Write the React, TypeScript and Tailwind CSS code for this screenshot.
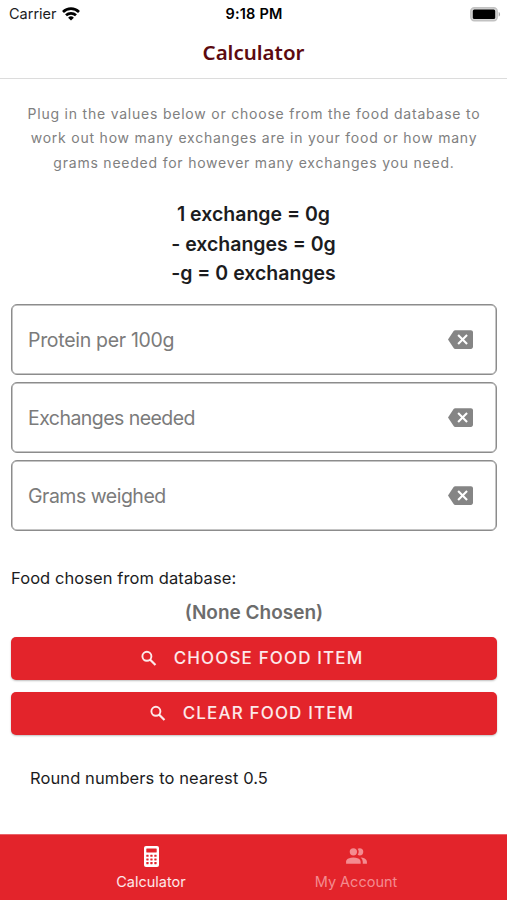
import { useState } from "react"
import { MdBackspace } from "react-icons/md"

const fields = [
  { id: "protein", label: "Protein per 100g", tracking: "tracking-[-0.3px]" },
  { id: "exchanges", label: "Exchanges needed", tracking: "tracking-[-0.55px]" },
  { id: "grams", label: "Grams weighed", tracking: "tracking-[-0.5px]" },
]

function WifiIcon() {
  return (
    <svg viewBox="0 0 18 14" className="h-[14px] w-[18px]" fill="none" stroke="#000" strokeWidth="2.7">
      <path d="M1 4.9a11.6 11.6 0 0 1 16 0" />
      <path d="M4 8.3a7.3 7.3 0 0 1 10 0" />
      <path d="M9 13.6 6.1 10.7a4.2 4.2 0 0 1 5.8 0Z" fill="#000" stroke="none" />
    </svg>
  )
}

function BatteryIcon() {
  return (
    <svg viewBox="0 0 31 15" className="h-[15px] w-[31px]">
      <rect x="0.75" y="0.75" width="26.5" height="13" rx="3.5" fill="#d4d4d4" stroke="#c2c2c2" strokeWidth="1.3" />
      <rect x="2.8" y="2.6" width="22.4" height="9.3" rx="1.5" fill="#000" />
      <path d="M28.7 4.9c1.8.7 1.8 4 0 4.7Z" fill="#a8a8a8" />
    </svg>
  )
}

function SearchIcon() {
  return (
    <svg viewBox="0 0 20 20" className="size-5" fill="none" stroke="currentColor">
      <circle cx="7.9" cy="7.3" r="4.5" strokeWidth="1.9" />
      <path d="m11.2 10.7 5.3 5.3" strokeWidth="2.2" />
    </svg>
  )
}

function CalculatorIcon() {
  return (
    <svg viewBox="0 0 15 21" className="h-[21px] w-[15px]">
      <rect width="15" height="21" rx="2" fill="#fff" />
      <g fill="#e3242b">
        <rect x="2.3" y="2.6" width="10.4" height="3.8" rx="0.4" />
        {[8.7, 12.4, 16.1].map((y) =>
          [2.3, 6.3, 10.3].map((x) => <rect key={`${x}-${y}`} x={x} y={y} width="2.3" height="2.1" rx="0.4" />)
        )}
      </g>
    </svg>
  )
}

function PeopleIcon() {
  return (
    <svg viewBox="0 0 24 24" className="h-[25px] w-[25px]" fill="currentColor">
      <path d="M16 17V19H2V17S2 13 9 13 16 17 16 17M12.5 7.5A3.5 3.5 0 1 0 9 11A3.5 3.5 0 0 0 12.5 7.5M15.94 13A5.32 5.32 0 0 1 18 17V19H22V17S22 13.37 15.94 13M15 4A3.39 3.39 0 0 0 13.07 4.59A5 5 0 0 1 13.07 10.41A3.39 3.39 0 0 0 15 11A3.5 3.5 0 0 0 15 4Z" />
    </svg>
  )
}

function FoodButton({ label, onClick }: { label: string; onClick?: () => void }) {
  return (
    <button
      type="button"
      onClick={onClick}
      className="flex h-[43px] w-full items-center justify-center gap-[15px] rounded-[5px] bg-[#e3242b] pr-[6px] text-[17px] font-medium tracking-[1.15px] text-white/90 shadow-[0_1px_2px_rgba(0,0,0,0.25)]"
    >
      <SearchIcon />
      <span>{label}</span>
    </button>
  )
}

export default function App() {
  const [values, setValues] = useState<Record<string, string>>({})

  return (
    <div className="flex h-[900px] w-[507px] flex-col overflow-hidden bg-white font-['Inter',sans-serif] text-[#1c1c1e]">
      <div className="grid h-7 grid-cols-3 items-center pr-[6px] pl-[9px] text-[14.5px] leading-none">
        <div className="flex items-center gap-[5px]">
          <span>Carrier</span>
          <WifiIcon />
        </div>
        <span className="-ml-[2px] text-center font-semibold tracking-[0.2px] text-black">9:18 PM</span>
        <div className="flex justify-end">
          <BatteryIcon />
        </div>
      </div>

      <header className="flex h-[51px] items-center justify-center border-b border-[#dcdcdc] pb-[2px]">
        <h1 className="font-['Noto_Sans',sans-serif] text-[20.5px] font-semibold text-[#5c0a10]">Calculator</h1>
      </header>

      <main className="flex flex-1 flex-col pr-[10px] pl-[11px]">
        <p className="mt-[23px] text-center text-[14px] leading-[24.4px] tracking-[0.78px] text-[#808080]">
          Plug in the values below or choose from the food database to
          <br />
          work out how many exchanges are in your food or how many
          <br />
          grams needed for however many exchanges you need.
        </p>

        <div className="mt-[25px] pr-px text-center text-[19.5px] leading-[29.3px] font-semibold">
          <p>1 exchange = 0g</p>
          <p>- exchanges = 0g</p>
          <p>-g = 0 exchanges</p>
        </div>

        <div className="mt-4 flex flex-col gap-[7px]">
          {fields.map((field) => (
            <label
              key={field.id}
              className="flex h-[71px] items-center justify-between rounded-[6px] border border-[#8c8c8c] pr-[23px] pl-4 inset-ring-[0.5px] inset-ring-[#8c8c8c]"
            >
              <input
                value={values[field.id] ?? ""}
                onChange={(e) => setValues({ ...values, [field.id]: e.target.value })}
                placeholder={field.label}
                className={`min-w-0 flex-1 pt-[2px] text-[19.5px] outline-none placeholder:text-[#7b7b7b] ${field.tracking}`}
              />
              <button type="button" aria-label="Clear" onClick={() => setValues({ ...values, [field.id]: "" })}>
                <MdBackspace className="size-[25px] text-[#858585]" />
              </button>
            </label>
          ))}
        </div>

        <p className="mt-[35px] text-[16.5px] leading-6 tracking-[0.08px]">Food chosen from database:</p>
        <p className="mt-[9px] text-center text-[19px] leading-7 font-semibold text-[#6c6c6c]">(None Chosen)</p>

        <div className="mt-[10px] flex flex-col gap-3">
          <FoodButton label="CHOOSE FOOD ITEM" />
          <FoodButton label="CLEAR FOOD ITEM" />
        </div>

        <p className="mt-[31px] ml-[19px] text-[16.5px] leading-6 tracking-[0.1px]">Round numbers to nearest 0.5</p>
      </main>

      <nav className="flex h-[66px] justify-center border-t border-[#e9636a] bg-[#e3242b] text-[14.5px] leading-5">
        <a className="flex w-[205px] flex-col items-center pt-[11px] text-white">
          <CalculatorIcon />
          <span className="mt-[5px] text-white/90">Calculator</span>
        </a>
        <a className="flex w-[205px] flex-col items-center pt-[9px] text-[#f48b90]">
          <PeopleIcon />
          <span className="mt-[3px]">My Account</span>
        </a>
      </nav>
    </div>
  )
}
